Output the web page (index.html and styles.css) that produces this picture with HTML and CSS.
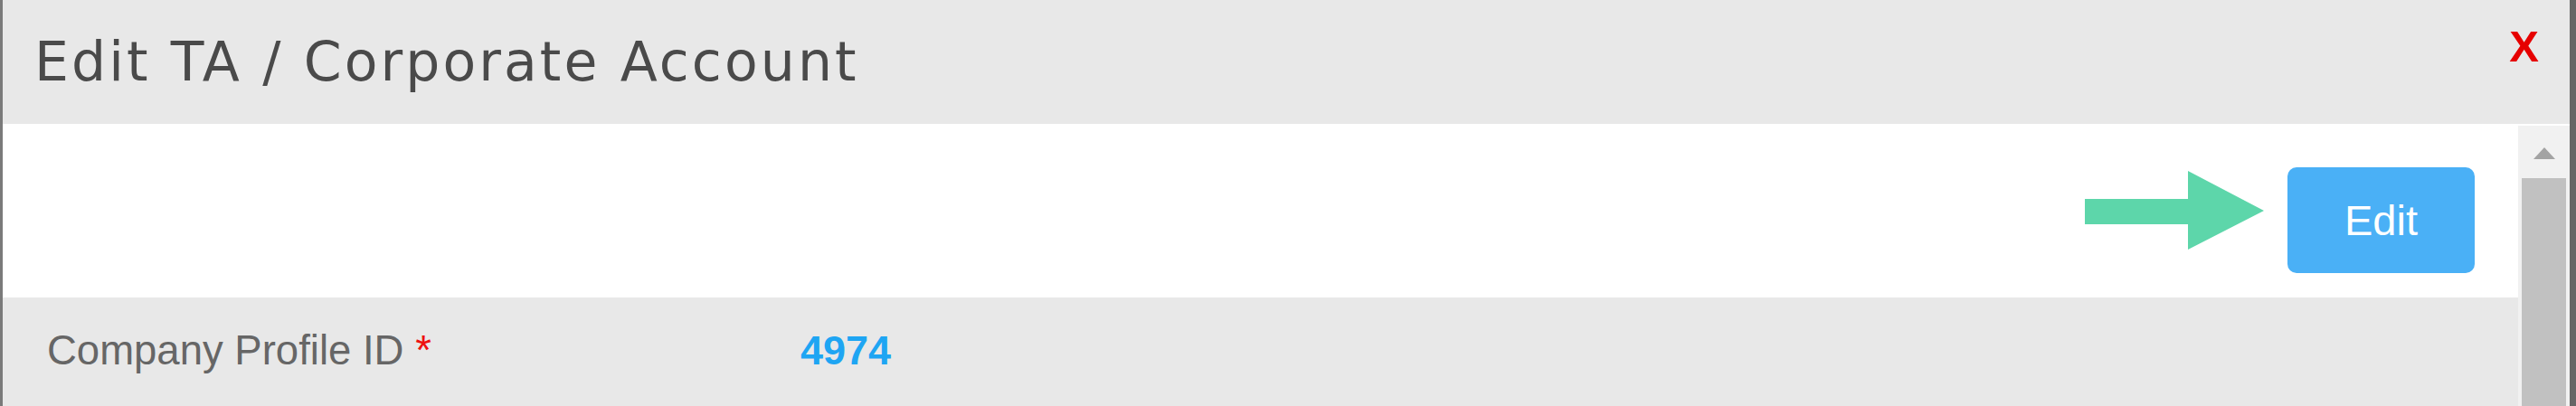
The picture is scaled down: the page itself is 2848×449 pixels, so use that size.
FILE: index.html
```html
<!DOCTYPE html>
<html lang="en">
<head>
<meta charset="utf-8">
<title>Edit TA / Corporate Account</title>
<link rel="stylesheet" href="styles.css">
</head>
<body>
<div class="modal">
  <div class="modal-header">
    <h1 class="modal-title">Edit TA / Corporate Account</h1>
    <span class="modal-close">X</span>
  </div>
  <div class="modal-body">
    <div class="content">
      <div class="toolbar">
        <svg class="hint-arrow" width="198" height="87" viewBox="0 0 198 87" aria-hidden="true">
          <path d="M0 31 H114 V0 L198 44 L114 87 V59 H0 Z" fill="#5dd6aa"/>
        </svg>
        <button class="btn-edit" type="button">Edit</button>
      </div>
      <div class="field-row">
        <div class="field-label">Company Profile ID <span class="req">*</span></div>
        <div class="field-value">4974</div>
      </div>
    </div>
    <div class="scrollbar">
      <div class="scroll-up"><span class="scroll-tri"></span></div>
      <div class="scroll-thumb"></div>
    </div>
  </div>
</div>
</body>
</html>
```
FILE: styles.css
```css
html, body {
  margin: 0;
  padding: 0;
  background: #ffffff;
}

.modal {
  height: 449px;
  display: flex;
  flex-direction: column;
  border-left: 3px solid #7a7a7a;
  border-right: 7px solid #666666;
  overflow: hidden;
}

.modal-header {
  height: 137px;
  flex: none;
  box-sizing: border-box;
  background: #e8e8e8;
  display: flex;
  justify-content: space-between;
  align-items: flex-start;
  padding: 23px 34px 0 35px;
}

.modal-title {
  margin: 10px 0 0 0;
  font-family: "DejaVu Sans", "Open Sans", sans-serif;
  font-weight: 400;
  font-size: 60px;
  line-height: normal;
  letter-spacing: 3.1px;
  color: #4a4a4a;
}

.modal-close {
  font-family: "Liberation Sans", Arial, sans-serif;
  font-weight: 700;
  font-size: 49px;
  line-height: normal;
  color: #e60000;
}

.modal-body {
  flex: 1;
  display: flex;
  min-height: 0;
}

.content {
  flex: 1;
  display: flex;
  flex-direction: column;
}

.toolbar {
  height: 192px;
  flex: none;
  box-sizing: border-box;
  background: #ffffff;
  display: flex;
  justify-content: flex-end;
  align-items: flex-start;
  padding: 48px 48px 0 0;
}

.hint-arrow {
  display: block;
  margin-top: 4px;
  margin-right: 26px;
}

.btn-edit {
  width: 207px;
  height: 117px;
  border: none;
  border-radius: 10px;
  background: #4ab0f6;
  color: #ffffff;
  font-family: "Liberation Sans", Arial, sans-serif;
  font-size: 47px;
  padding: 0;
  display: flex;
  align-items: center;
  justify-content: center;
}

.field-row {
  flex: 1;
  background: #e8e8e8;
  display: grid;
  grid-template-columns: 833px 1fr;
  align-content: start;
  padding: 33px 0 0 49px;
  font-family: "Liberation Sans", Arial, sans-serif;
  font-size: 45.5px;
  line-height: normal;
}

.field-label {
  color: #666666;
}

.req {
  color: #ee1111;
}

.field-value {
  color: #1ea5f3;
  font-weight: 700;
  font-size: 45px;
}

.scrollbar {
  width: 57px;
  flex: none;
  background: #f1f1f1;
  margin-top: 2px;
  display: flex;
  flex-direction: column;
}

.scroll-up {
  height: 58px;
  flex: none;
  display: flex;
  justify-content: center;
  align-items: flex-start;
  padding-top: 24px;
  box-sizing: border-box;
}

.scroll-tri {
  width: 0;
  height: 0;
  border-left: 12.5px solid transparent;
  border-right: 12.5px solid transparent;
  border-bottom: 13px solid #a3a3a3;
}

.scroll-thumb {
  flex: 1;
  margin: 0 4px;
  background: #c1c1c1;
}
```
